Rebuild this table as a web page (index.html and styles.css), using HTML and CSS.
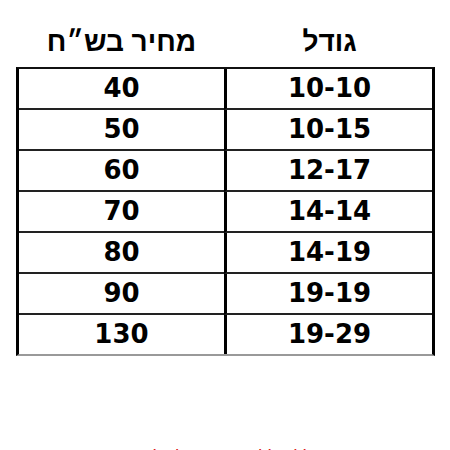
FILE: index.html
```html
<!DOCTYPE html>
<html lang="he" dir="rtl">
<head>
<meta charset="utf-8">
<link rel="stylesheet" href="styles.css">
</head>
<body>
<div class="page">
  <div class="head">
    <div class="hcell hsize">גודל</div>
    <div class="hcell">מחיר בש״ח</div>
  </div>
  <div class="grid">
    <div class="cell size">10-10</div><div class="cell">40</div>
    <div class="cell size">10-15</div><div class="cell">50</div>
    <div class="cell size">12-17</div><div class="cell">60</div>
    <div class="cell size">14-14</div><div class="cell">70</div>
    <div class="cell size">14-19</div><div class="cell">80</div>
    <div class="cell size">19-19</div><div class="cell">90</div>
    <div class="cell size last">19-29</div><div class="cell last">130</div>
  </div>
  <p class="note">ללא ללא תוספת לשליח</p>
</div>
</body>
</html>
```
FILE: styles.css
```css
html, body {
  margin: 0;
  padding: 0;
  background: #fff;
}
.page {
  width: 450px;
  height: 450px;
  overflow: hidden;
}
.head {
  display: grid;
  grid-template-columns: 208px 205px;
  width: 419px;
  padding: 0 3px;
  box-sizing: border-box;
  margin: 27px 15px 10px 0;
}
.hcell {
  font-family: "Liberation Sans", Arial, sans-serif;
  font-weight: bold;
  font-size: 28px;
  line-height: 30px;
  text-align: center;
  color: #000;
}
.hsize {
  padding-left: 3px;
}
.grid {
  display: grid;
  grid-template-columns: 208px 205px;
  width: 419px;
  box-sizing: border-box;
  margin-right: 15px;
  border-left: 3px solid #000;
  border-right: 3px solid #000;
  border-top: 2px solid #111;
  border-bottom: 2px solid #999;
}
.cell {
  height: 39px;
  border-bottom: 2px solid #222;
  font-family: "DejaVu Sans", sans-serif;
  font-weight: bold;
  font-size: 26px;
  line-height: 39px;
  text-align: center;
  color: #000;
  direction: ltr;
}
.size {
  border-left: 3px solid #000;
}
.last {
  border-bottom: none;
}
.note {
  margin: 92px 0 0 0;
  font-family: "Liberation Sans", Arial, sans-serif;
  font-size: 18px;
  line-height: 20px;
  color: #e02020;
  text-align: center;
}
```
